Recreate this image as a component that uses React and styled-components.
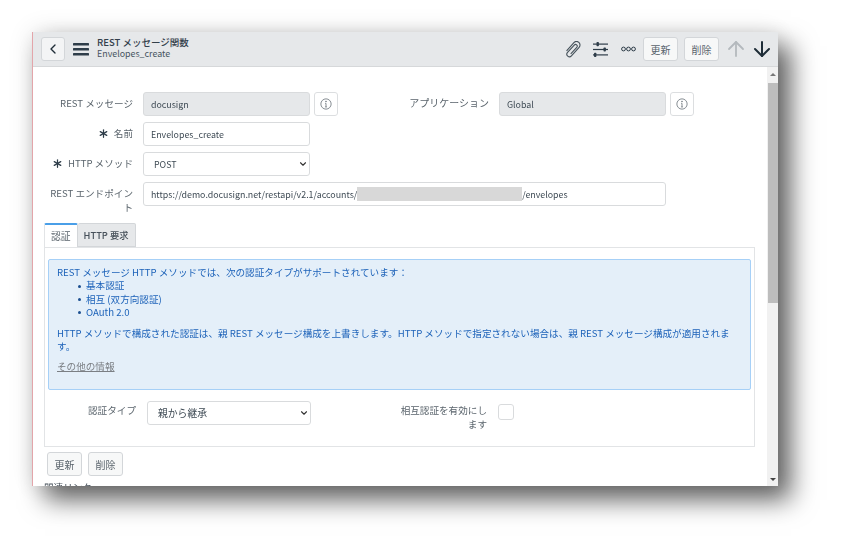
import React from "react";
import styled, { createGlobalStyle } from "styled-components";
import { ArrowDown, ArrowUp, Asterisk, ChevronDown, ChevronLeft } from "lucide-react";

const GlobalStyle = createGlobalStyle`
  html, body {
    margin: 0;
    background: #fff;
  }
  body {
    font-family: "Noto Sans CJK JP", "Noto Sans", sans-serif;
    font-size: 9.6px;
    color: #46505a;
  }
`;

function InfoIcon() {
  return (
    <svg width="12" height="12" viewBox="0 0 14 14" fill="none" stroke="#737b82" strokeWidth="1">
      <circle cx="7" cy="7" r="6" />
      <path d="M7 6.2v4M5.8 10.4h2.4M6 6.2h1" />
      <circle cx="7" cy="4" r=".5" fill="#737b82" />
    </svg>
  );
}

function MenuIcon() {
  return (
    <svg width="16" height="13" viewBox="0 0 16 13" fill="#2e3d49">
      <rect y="0" width="16" height="2.6" rx=".6" />
      <rect y="5" width="16" height="2.6" rx=".6" />
      <rect y="10" width="16" height="2.6" rx=".6" />
    </svg>
  );
}

function ClipIcon() {
  return (
    <svg width="17" height="17" viewBox="0 0 17 17" fill="none" stroke="#46525b" strokeWidth="1.1">
      <path
        transform="rotate(42 8.5 8.5)"
        d="M5 13.5V2.5a3.5 3.5 0 0 1 7 0V14a2.6 2.6 0 0 1-5.2 0V4a1.7 1.7 0 0 1 3.4 0v9"
      />
    </svg>
  );
}

function SlidersIcon() {
  return (
    <svg width="15" height="15" viewBox="0 0 15 15" fill="#2e3d49">
      <rect y="1.5" width="15" height="1.2" />
      <rect y="6.9" width="15" height="1.2" />
      <rect y="12.3" width="15" height="1.2" />
      <rect x="3.5" y="0" width="2.4" height="4.2" rx=".8" />
      <rect x="10.5" y="5.4" width="2.4" height="4.2" rx=".8" />
      <rect x="1" y="10.8" width="2.4" height="4.2" rx=".8" />
    </svg>
  );
}

function MoreIcon() {
  return (
    <svg width="15" height="6" viewBox="0 0 15 6" fill="none" stroke="#2e3d49" strokeWidth="1">
      <circle cx="2.5" cy="3" r="1.9" />
      <circle cx="7.5" cy="3" r="1.9" />
      <circle cx="12.5" cy="3" r="1.9" />
    </svg>
  );
}

export default function App() {
  return (
    <Page>
      <GlobalStyle />
      <Window>
        <Header>
          <IconButton>
            <ChevronLeft size={16} color="#1f2d38" strokeWidth={2} />
          </IconButton>
          <MenuWrap>
            <MenuIcon />
          </MenuWrap>
          <TitleBlock>
            <Title>REST メッセージ関数</Title>
            <Subtitle>Envelopes_create</Subtitle>
          </TitleBlock>
          <HeaderActions>
            <ActionIcon $gap={0}>
              <ClipIcon />
            </ActionIcon>
            <ActionIcon $gap={12}>
              <SlidersIcon />
            </ActionIcon>
            <ActionIcon $gap={13}>
              <MoreIcon />
            </ActionIcon>
            <ActionIcon $gap={7}>
              <Button>更新</Button>
            </ActionIcon>
            <ActionIcon $gap={6}>
              <Button>削除</Button>
            </ActionIcon>
            <ActionIcon $gap={5}>
              <ArrowUp size={24} color="#b4b9bd" strokeWidth={1.8} />
            </ActionIcon>
            <ActionIcon $gap={2}>
              <ArrowDown size={24} color="#1f2d38" strokeWidth={2} />
            </ActionIcon>
          </HeaderActions>
        </Header>

        <Body>
          <Content>
            <Form>
              <Row>
                <Label>REST メッセージ</Label>
                <Field $readOnly>docusign</Field>
                <InfoButton>
                  <InfoIcon />
                </InfoButton>
                <SecondLabel>アプリケーション</SecondLabel>
                <Field $readOnly>Global</Field>
                <InfoButton>
                  <InfoIcon />
                </InfoButton>
              </Row>
              <Row>
                <Label>
                  <RequiredMark size={15} color="#2e3d49" strokeWidth={2} />
                  名前
                </Label>
                <Field>Envelopes_create</Field>
              </Row>
              <Row>
                <Label>
                  <RequiredMark size={15} color="#2e3d49" strokeWidth={2} />
                  HTTP メソッド
                </Label>
                <SelectBox $width={167}>
                  <SelectValue $latin>POST</SelectValue>
                  <ChevronDown size={10} color="#333" strokeWidth={2.6} />
                </SelectBox>
              </Row>
              <Row>
                <Label>REST エンドポイント</Label>
                <Field $wide>
                  https://demo.docusign.net/restapi/v2.1/accounts/
                  <Redacted />
                  /envelopes
                </Field>
              </Row>
            </Form>

            <Tabs>
              <Tab $active>認証</Tab>
              <Tab>HTTP 要求</Tab>
            </Tabs>
            <Panel>
              <Alert>
                <AlertText>REST メッセージ HTTP メソッドでは、次の認証タイプがサポートされています：</AlertText>
                <AlertList>
                  <li>基本認証</li>
                  <li>相互 (双方向認証)</li>
                  <li>OAuth 2.0</li>
                </AlertList>
                <AlertText>
                  HTTP メソッドで構成された認証は、親 REST メッセージ構成を上書きします。HTTP メソッドで指定されない場合は、親 REST メッセージ構成が適用されます。
                </AlertText>
                <MoreLink>その他の情報</MoreLink>
              </Alert>
              <AuthRow>
                <AuthLabel>認証タイプ</AuthLabel>
                <SelectBox $width={164}>
                  <SelectValue>親から継承</SelectValue>
                  <ChevronDown size={10} color="#333" strokeWidth={2.6} />
                </SelectBox>
                <MutualLabel>相互認証を有効にします</MutualLabel>
                <Checkbox />
              </AuthRow>
            </Panel>
            <FooterButtons>
              <Button>更新</Button>
              <Button>削除</Button>
            </FooterButtons>
            <RelatedLinks>関連リンク</RelatedLinks>
          </Content>

          <Scrollbar>
            <ScrollArrow $up />
            <ScrollThumb />
            <ScrollTrack />
            <ScrollArrow />
          </Scrollbar>
        </Body>
      </Window>
    </Page>
  );
}

const Page = styled.div`
  padding: 32px 0 0 32px;
  height: 551px;
  box-sizing: border-box;
  overflow: hidden;
  filter: blur(0.3px);
`;

const Window = styled.div`
  width: 746px;
  height: 454px;
  display: flex;
  flex-direction: column;
  background: #fff;
  border-left: 1px solid #e3a5aa;
  box-sizing: border-box;
  box-shadow: 13px 14px 24px rgba(0, 0, 0, 0.6), 0 0 24px rgba(0, 0, 0, 0.12);
`;

const Header = styled.header`
  height: 35px;
  flex: none;
  display: flex;
  align-items: center;
  padding: 0 4px 0 8px;
  background: #e6e8ea;
  border-bottom: 1px solid #d6d8da;
  box-sizing: border-box;
`;

const IconButton = styled.div`
  width: 24px;
  height: 24px;
  display: flex;
  align-items: center;
  justify-content: center;
  background: #f3f4f5;
  border: 1px solid #d3d6d9;
  border-radius: 3px;
  box-sizing: border-box;
`;

const MenuWrap = styled.div`
  margin-left: 8px;
  display: flex;
`;

const TitleBlock = styled.div`
  margin: 0 0 2px 8px;
  display: flex;
  flex-direction: column;
  line-height: 11.5px;
`;

const Title = styled.div`
  font-size: 9.5px;
  font-weight: 500;
  color: #33404b;
`;

const Subtitle = styled.div`
  font-size: 8.9px;
  color: #46545f;
`;

const HeaderActions = styled.div`
  margin-left: auto;
  display: flex;
  align-items: center;
`;

const ActionIcon = styled.div`
  margin-left: ${(p) => p.$gap}px;
  display: flex;
  align-items: center;
`;

const Button = styled.div`
  width: 35px;
  height: 24px;
  display: flex;
  align-items: center;
  justify-content: center;
  font-size: 10px;
  color: #5a646c;
  background: #f7f8f8;
  border: 1px solid #d3d6d9;
  border-radius: 3px;
  box-sizing: border-box;
`;

const Body = styled.div`
  flex: 1;
  min-height: 0;
  display: flex;
`;

const Content = styled.main`
  flex: 1;
  min-width: 0;
  overflow: hidden;
  padding: 25px 12px 0 11px;
`;

const Form = styled.div`
  display: flex;
  flex-direction: column;
  gap: 6px;
`;

const Row = styled.div`
  display: flex;
  align-items: flex-start;
`;

const Label = styled.label`
  width: 85px;
  margin: 0 10px 0 4px;
  flex: none;
  min-height: 24px;
  display: block;
  padding-top: 4px;
  line-height: 14px;
  text-align: right;
  color: #5a646c;
  box-sizing: border-box;
`;

const SecondLabel = styled(Label)`
  width: 151px;
  margin: 0 10px 0 0;
  font-size: 10px;
`;

const RequiredMark = styled(Asterisk)`
  vertical-align: -4px;
  margin-right: 3px;
`;

const Field = styled.div`
  width: ${(p) => (p.$wide ? "523px" : "167px")};
  height: 24px;
  flex: none;
  display: flex;
  align-items: center;
  padding: 0 7px;
  font-size: 8.85px;
  color: #3e4a54;
  background: ${(p) => (p.$readOnly ? "#e6e8ea" : "#fff")};
  border: 1px solid #d9dbdd;
  border-radius: 3px;
  box-sizing: border-box;
  white-space: nowrap;
`;

const Redacted = styled.span`
  width: 165px;
  height: 14px;
  flex: none;
  background: #d8d8d8;
`;

const SelectBox = styled.div`
  width: ${(p) => p.$width}px;
  height: 24px;
  flex: none;
  display: flex;
  align-items: center;
  justify-content: space-between;
  padding: 0 1px 0 10px;
  color: #3e4a54;
  background: #fff;
  border: 1px solid #d9dbdd;
  border-radius: 3px;
  box-sizing: border-box;
`;

const SelectValue = styled.span`
  font-size: ${(p) => (p.$latin ? "8.9px" : "9.8px")};
`;

const InfoButton = styled.div`
  width: 24px;
  height: 24px;
  margin-left: 4px;
  flex: none;
  display: flex;
  align-items: center;
  justify-content: center;
  border: 1px solid #dcdee0;
  border-radius: 3px;
  box-sizing: border-box;
`;

const Tabs = styled.div`
  margin-top: 9px;
  display: flex;
`;

const Tab = styled.div`
  height: 24px;
  display: flex;
  align-items: center;
  padding: 0 6px;
  font-size: ${(p) => (p.$active ? "9.8px" : "9.3px")};
  font-weight: ${(p) => (p.$active ? 400 : 500)};
  color: ${(p) => (p.$active ? "#5a646c" : "#46505a")};
  background: ${(p) => (p.$active ? "#fff" : "#e6e8ea")};
  border-top: ${(p) => (p.$active ? "2px solid #4a9fe8" : "1px solid #d3d6d9")};
  border-right: 1px solid #d3d6d9;
  border-bottom: ${(p) => (p.$active ? "none" : "1px solid #d3d6d9")};
  border-left: ${(p) => (p.$active ? "1px solid #e2e4e6" : "none")};
  border-radius: 2px 2px 0 0;
  box-sizing: border-box;
`;

const Panel = styled.section`
  height: 200px;
  width: 711px;
  padding: 11px 3px 0;
  border: 1px solid #e2e4e6;
  box-sizing: border-box;
`;

const Alert = styled.div`
  height: 131px;
  padding: 6px 8px;
  color: #1c62b9;
  background: #e4eff9;
  border: 1px solid #a6d0f7;
  border-radius: 2px;
  line-height: 13.4px;
  box-sizing: border-box;
`;

const AlertText = styled.p`
  margin: 0;
`;

const AlertList = styled.ul`
  margin: 0 0 7px;
  padding-left: 21px;
  list-style: none;

  li {
    display: flex;
    align-items: center;
    gap: 5px;
  }

  li::before {
    content: "";
    width: 3px;
    height: 3px;
    border-radius: 50%;
    background: #1c4f90;
  }
`;

const MoreLink = styled.a`
  display: block;
  margin-top: 7px;
  color: #7b7f84;
  text-decoration: underline;
`;

const AuthRow = styled.div`
  margin-top: 11px;
  display: flex;
  align-items: flex-start;
`;

const AuthLabel = styled.div`
  width: 88px;
  margin-right: 11px;
  padding-top: 3px;
  line-height: 13px;
  text-align: right;
  color: #5a646c;
  flex: none;
`;

const MutualLabel = styled.div`
  width: 90px;
  margin: 0 11px 0 86px;
  padding-top: 3px;
  line-height: 13.5px;
  text-align: right;
  color: #5a646c;
  flex: none;
`;

const Checkbox = styled.div`
  width: 16px;
  height: 16px;
  margin-top: 3px;
  border: 1px solid #d9dbdd;
  border-radius: 3px;
  box-sizing: border-box;
`;

const FooterButtons = styled.div`
  margin: 5px 0 0 3px;
  display: flex;
  gap: 6px;
`;

const RelatedLinks = styled.div`
  margin-top: 5px;
  line-height: 13px;
  color: #46505a;
`;

const Scrollbar = styled.div`
  width: 11px;
  flex: none;
  display: flex;
  flex-direction: column;
  background: #f1f1f1;
`;

const ScrollArrow = styled.div`
  height: 14px;
  flex: none;
  display: flex;
  align-items: center;
  justify-content: center;

  &::before {
    content: "";
    border-left: 3px solid transparent;
    border-right: 3px solid transparent;
    ${(p) => (p.$up ? "border-bottom: 3px solid #777;" : "border-top: 3px solid #444;")}
  }
`;

const ScrollThumb = styled.div`
  height: 220px;
  flex: none;
  margin: 2px 0 0 1px;
  background: #bdbdbd;
`;

const ScrollTrack = styled.div`
  flex: 1;
`;
